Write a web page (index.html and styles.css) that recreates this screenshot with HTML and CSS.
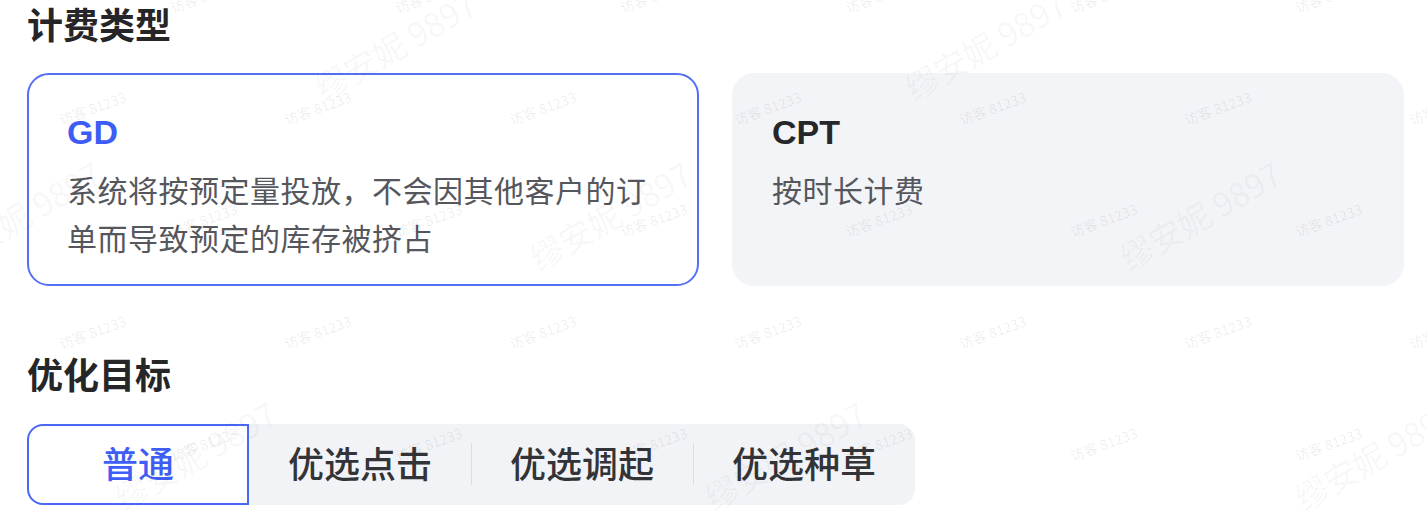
FILE: index.html
```html
<!DOCTYPE html>
<html lang="zh-CN">
<head>
<meta charset="utf-8">
<title>计费类型</title>
<link rel="stylesheet" href="styles.css">
</head>
<body>
<main class="page">
  <h2 class="section-title">计费类型</h2>
  <div class="cards">
    <div class="card active">
      <div class="card-name">GD</div>
      <p class="card-desc">系统将按预定量投放，不会因其他客户的订单而导致预定的库存被挤占</p>
    </div>
    <div class="card">
      <div class="card-name">CPT</div>
      <p class="card-desc">按时长计费</p>
    </div>
  </div>

  <h2 class="section-title second">优化目标</h2>
  <div class="seg">
    <div class="seg-item active">普通</div>
    <div class="seg-item">优选点击</div>
    <div class="seg-item sep">优选调起</div>
    <div class="seg-item sep">优选种草</div>
  </div>
</main>

<div class="wm-layer wm-small" aria-hidden="true">
  <div class="wm-row odd"><span>访客 81233</span><span>访客 81233</span><span>访客 81233</span><span>访客 81233</span><span>访客 81233</span><span>访客 81233</span><span>访客 81233</span></div>
  <div class="wm-row even"><span>访客 81233</span><span>访客 81233</span><span>访客 81233</span><span>访客 81233</span><span>访客 81233</span><span>访客 81233</span><span>访客 81233</span></div>
  <div class="wm-row odd"><span>访客 81233</span><span>访客 81233</span><span>访客 81233</span><span>访客 81233</span><span>访客 81233</span><span>访客 81233</span><span>访客 81233</span></div>
  <div class="wm-row even"><span>访客 81233</span><span>访客 81233</span><span>访客 81233</span><span>访客 81233</span><span>访客 81233</span><span>访客 81233</span><span>访客 81233</span></div>
  <div class="wm-row odd"><span>访客 81233</span><span>访客 81233</span><span>访客 81233</span><span>访客 81233</span><span>访客 81233</span><span>访客 81233</span><span>访客 81233</span></div>
</div>

<div class="wm-layer wm-big" aria-hidden="true">
  <div class="wb-row r0"><span>缪安妮 9897</span><span>缪安妮 9897</span><span>缪安妮 9897</span></div>
  <div class="wb-row r1"><span>缪安妮 9897</span><span>缪安妮 9897</span><span>缪安妮 9897</span></div>
  <div class="wb-row r2"><span>缪安妮 9897</span><span>缪安妮 9897</span><span>缪安妮 9897</span></div>
</div>
</body>
</html>
```

FILE: styles.css
```css
html, body {
  margin: 0;
  padding: 0;
  height: 100%;
  background: #ffffff;
  overflow: hidden;
}

body {
  position: relative;
  font-family: "Noto Sans CJK SC", "Noto Sans", sans-serif;
  color: #2a2a2c;
}

.page {
  padding: 0 23px 0 27px;
}

.section-title {
  margin: 0;
  font-size: 36px;
  line-height: 46px;
  font-weight: 700;
  color: #262628;
}

.section-title.second {
  margin-top: 64px;
}

.cards {
  margin-top: 27px;
  display: grid;
  grid-template-columns: 1fr 1fr;
  gap: 33px;
}

.card {
  box-sizing: border-box;
  height: 213px;
  border: 2px solid transparent;
  border-radius: 22px;
  background: #f3f4f7;
  padding: 37px 38px 0 38px;
}

.card.active {
  background: #ffffff;
  border-color: #5470f6;
}

.card-name {
  font-family: "Liberation Sans", Arial, sans-serif;
  font-size: 34px;
  line-height: 40px;
  font-weight: 700;
  color: #26272b;
}

.card.active .card-name {
  color: #3d5cf5;
}

.card-desc {
  margin: 13px 0 0 0;
  font-size: 30px;
  line-height: 48px;
  letter-spacing: 0.5px;
  color: #55575c;
}

.seg {
  margin-top: 28px;
  display: flex;
  width: 888px;
  height: 81px;
  background: #f2f3f6;
  border-radius: 16px;
}

.seg-item {
  position: relative;
  box-sizing: border-box;
  flex: 0 0 222px;
  display: flex;
  align-items: center;
  justify-content: center;
  padding-bottom: 5px;
  font-size: 36px;
  line-height: 46px;
  font-weight: 500;
  color: #333437;
}

.seg-item.active {
  background: #ffffff;
  border: 2px solid #4a68f6;
  border-radius: 16px 0 0 16px;
  color: #3f5ef5;
}

.seg-item.sep::before {
  content: "";
  position: absolute;
  left: 0;
  top: 19px;
  bottom: 20px;
  width: 1px;
  background: #dcdee2;
}

/* watermark overlays */
.wm-layer {
  position: absolute;
  inset: 0;
  overflow: hidden;
  pointer-events: none;
  display: flex;
  flex-direction: column;
}

.wm-row {
  flex: 0 0 112px;
  display: flex;
  align-items: center;
  white-space: nowrap;
}

.wm-row:first-child {
  margin-top: -60px;
}

.wm-row.odd {
  padding-left: 91px;
}

.wm-row.even {
  margin-left: -20px;
}

.wm-row span {
  flex: 0 0 225px;
  text-align: center;
  font-size: 14px;
  color: rgba(0, 0, 0, 0.08);
  transform: rotate(-20deg);
}

.wb-row {
  flex: 0 0 100px;
  display: flex;
  align-items: center;
  white-space: nowrap;
}

.wb-row span {
  flex: 0 0 590px;
  text-align: center;
  font-size: 33px;
  color: rgba(0, 0, 0, 0.045);
  transform: rotate(-30deg);
}

.wb-row.r0 {
  margin-top: -5px;
  margin-left: 100px;
}

.wb-row.r1 {
  margin-top: 70px;
  margin-left: -275px;
}

.wb-row.r2 {
  margin-top: 140px;
  margin-left: -100px;
}
```
